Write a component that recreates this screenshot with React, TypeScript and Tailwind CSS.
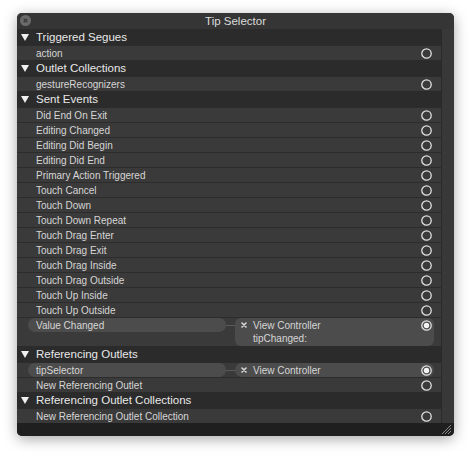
import React from "react";

type Row =
  | { kind: "header"; label: string }
  | { kind: "item"; label: string }
  | { kind: "link"; label: string; target: string; action?: string };

const rows: Row[] = [
  { kind: "header", label: "Triggered Segues" },
  { kind: "item", label: "action" },
  { kind: "header", label: "Outlet Collections" },
  { kind: "item", label: "gestureRecognizers" },
  { kind: "header", label: "Sent Events" },
  { kind: "item", label: "Did End On Exit" },
  { kind: "item", label: "Editing Changed" },
  { kind: "item", label: "Editing Did Begin" },
  { kind: "item", label: "Editing Did End" },
  { kind: "item", label: "Primary Action Triggered" },
  { kind: "item", label: "Touch Cancel" },
  { kind: "item", label: "Touch Down" },
  { kind: "item", label: "Touch Down Repeat" },
  { kind: "item", label: "Touch Drag Enter" },
  { kind: "item", label: "Touch Drag Exit" },
  { kind: "item", label: "Touch Drag Inside" },
  { kind: "item", label: "Touch Drag Outside" },
  { kind: "item", label: "Touch Up Inside" },
  { kind: "item", label: "Touch Up Outside" },
  { kind: "link", label: "Value Changed", target: "View Controller", action: "tipChanged:" },
  { kind: "header", label: "Referencing Outlets" },
  { kind: "link", label: "tipSelector", target: "View Controller" },
  { kind: "item", label: "New Referencing Outlet" },
  { kind: "header", label: "Referencing Outlet Collections" },
  { kind: "item", label: "New Referencing Outlet Collection" },
];

const Ring = ({ filled }: { filled?: boolean }) => (
  <svg width="11" height="11" viewBox="0 0 11 11" className="shrink-0">
    <circle cx="5.5" cy="5.5" r="4.7" fill="none" stroke="#e2e2e2" strokeWidth="1.3" />
    {filled && <circle cx="5.5" cy="5.5" r="2.7" fill="#f2f2f2" />}
  </svg>
);

const Triangle = () => (
  <svg width="8" height="7" viewBox="0 0 8 7" className="shrink-0">
    <polygon points="0,0 8,0 4,7" fill="#f0f0f0" />
  </svg>
);

const Cross = () => (
  <svg width="6" height="6" viewBox="0 0 6 6" className="shrink-0">
    <path d="M1 1 L5 5 M5 1 L1 5" stroke="#d8d8d8" strokeWidth="1.6" strokeLinecap="round" />
  </svg>
);

const HeaderRow = ({ label }: { label: string }) => (
  <div className="h-[16px] bg-[#2b2b2b] flex items-center pl-[4px]">
    <Triangle />
    <span className="ml-[7px] text-[11.5px] text-[#e8e8e8] leading-none mt-[1px]">{label}</span>
  </div>
);

const ItemRow = ({ label }: { label: string }) => (
  <div className="h-[15px] bg-[#3a3a3a] border-t border-[#2c2c2c] flex items-center justify-between pl-[19px] pr-[9px]">
    <span className="text-[10px] text-[#d6d6d6] leading-none mt-[1px]">{label}</span>
    <Ring />
  </div>
);

const LinkRow = ({ label, target, action }: { label: string; target: string; action?: string }) => (
  <div className={`${action ? "h-[29px]" : "h-[15px]"} bg-[#3a3a3a] border-t border-[#2c2c2c] flex items-start pl-[11px] pr-[7px]`}>
    <div className="w-[198px] h-[14px] rounded-full bg-[#4c4c4c] flex items-center pl-[8px]">
      <span className="text-[10px] text-[#d6d6d6] leading-none mt-[1px]">{label}</span>
    </div>
    <div className="w-[9px] h-[1px] bg-[#5a5a5a] mt-[7px]" />
    <div
      className={`flex-1 ${action ? "h-[28px] rounded-[6px]" : "h-[14px] rounded-full"} bg-[#4c4c4c] flex flex-col pl-[6px] pr-[2px]`}
    >
      <div className="h-[14px] flex items-center">
        <Cross />
        <span className="ml-[6px] text-[10px] text-[#d6d6d6] leading-none flex-1 mt-[1px]">{target}</span>
        <Ring filled />
      </div>
      {action && (
        <div className="h-[14px] flex items-center pl-[12px]">
          <span className="text-[10px] text-[#d6d6d6] leading-none">{action}</span>
        </div>
      )}
    </div>
  </div>
);

export default function App() {
  return (
    <div
      className="w-[471px] h-[459px] bg-white pt-[13px] pl-[17px]"
      style={{ fontFamily: '"Liberation Sans", Arial, sans-serif' }}
    >
      <div className="w-[437px] h-[423px] rounded-[5px] overflow-hidden bg-[#2b2b2b] flex flex-col shadow-[0_3px_14px_rgba(0,0,0,0.35)]">
        <div className="h-[16px] bg-[#353535] relative flex items-center justify-center shrink-0">
          <div className="absolute left-[3px] top-[2px] w-[11px] h-[11px] rounded-full bg-[#6a6a6a] flex items-center justify-center">
            <svg width="5" height="5" viewBox="0 0 5 5">
              <path d="M0.7 0.7 L4.3 4.3 M4.3 0.7 L0.7 4.3" stroke="#3a3a3a" strokeWidth="1.3" />
            </svg>
          </div>
          <span className="text-[11.5px] text-[#dcdcdc] leading-none mt-[1px]">Tip Selector</span>
        </div>
        <div className="flex flex-1 min-h-0">
          <div className="w-[424px] flex flex-col">
            {rows.map((r, i) =>
              r.kind === "header" ? (
                <HeaderRow key={i} label={r.label} />
              ) : r.kind === "item" ? (
                <ItemRow key={i} label={r.label} />
              ) : (
                <LinkRow key={i} label={r.label} target={r.target} action={r.action} />
              )
            )}
          </div>
          <div className="w-[13px] bg-[#383838] border-l border-[#2a2a2a]" />
        </div>
        <div className="h-[13px] bg-[#1f1f1f] shrink-0 flex justify-end items-end pr-[2px] pb-[1px]">
          <svg width="11" height="11" viewBox="0 0 11 11">
            <path d="M1 10 L10 1 M4 10 L10 4 M7 10 L10 7" stroke="#8a8a8a" strokeWidth="1" />
          </svg>
        </div>
      </div>
    </div>
  );
}
